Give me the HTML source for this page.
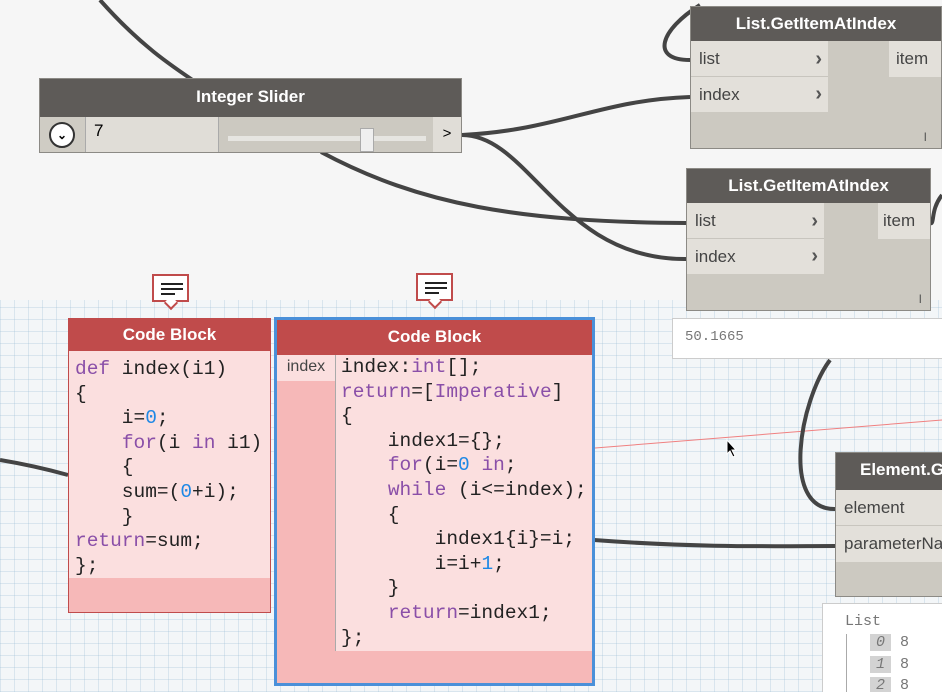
<!DOCTYPE html>
<html><head><style>
*{box-sizing:border-box;margin:0;padding:0}
body{width:942px;height:692px;overflow:hidden;position:relative;background:#f6f6f6;font-family:"Liberation Sans",sans-serif}
.grid{position:absolute;left:0;top:300px;width:942px;height:392px;background:
repeating-linear-gradient(90deg,rgba(150,185,210,.28) 0 1px,transparent 1px 14px),
repeating-linear-gradient(0deg,rgba(150,185,210,.28) 0 1px,transparent 1px 12px),#f3f6f8;}
.node{position:absolute;background:#ccc9c1;border:1px solid #8c8a85;overflow:hidden}
.hd{background:#5e5b58;color:#fff;font-weight:bold;font-size:17px;text-align:center;white-space:nowrap}
.port{position:absolute;background:#e3e0da;color:#444;font-size:17px;padding-left:8px;border-bottom:1px solid #c8c5be;white-space:nowrap}
.arr{position:absolute;right:6px;font-weight:bold;color:#555;font-size:20px}
.mono{font-family:"Liberation Mono",monospace}
.cb{position:absolute;background:#fbdfdf}
.cb .hd{background:#c04b4b}
.code{font-family:"Liberation Mono",monospace;font-size:19.5px;line-height:24.6px;color:#222;white-space:pre}
.k{color:#8a4fa8}.n{color:#1e88e5}
.note{position:absolute;width:37px;height:28px;background:#fff;border:2px solid #c04b4b}
.note i{position:absolute;left:7px;height:1.5px;background:#222}
.note b{position:absolute;left:12px;bottom:-8px;width:10px;height:10px;background:#fff;border-right:2px solid #c04b4b;border-bottom:2px solid #c04b4b;transform:rotate(45deg)}
</style></head><body>
<div class="grid"></div>
<svg style="position:absolute;left:0;top:0" width="942" height="692">
<line x1="595" y1="448" x2="942" y2="420" stroke="#f08080" stroke-width="1"/>
<g fill="none" stroke="#444" stroke-width="4">
<path d="M100 0 C140 45 170 65 200 85"/>
<path d="M321 152 C420 205 520 222 686 223"/>
<path d="M462 135 C560 130 600 100 690 97"/>
<path d="M700 5 C660 30 650 60 690 60"/>
<path d="M462 135 C530 135 560 260 686 259"/>
<path d="M0 460 C30 465 50 470 68 475"/>
<path d="M594 540 C700 548 780 546 835 546"/>
<path d="M830 360 C800 400 780 510 835 509"/>
<path d="M942 195 C930 210 935 225 930 223"/>
</g>
<path d="M727 440 l0 14 l3-3 l3 6 l2-1 l-3-6 l4 0z" fill="#000" stroke="#fff" stroke-width="1"/>
</svg>

<div class="node" style="left:39px;top:78px;width:423px;height:75px">
<div class="hd" style="height:38px;line-height:36px">Integer Slider</div>
<div style="position:absolute;left:0;top:38px;width:45px;height:35px;background:#cfccc4"><div style="position:absolute;left:9px;top:5px;width:26px;height:26px;border-radius:50%;border:2px solid #333;background:#fff;text-align:center;font-size:12px;line-height:22px;font-weight:bold">⌄</div></div>
<div style="position:absolute;left:45px;top:38px;width:134px;height:35px;background:#e0ddd7;border-left:1px solid #aaa;border-right:1px solid #aaa;padding:4px 8px;font-size:17px">7</div>
<div style="position:absolute;left:188px;top:57px;width:198px;height:5px;background:#e6e5e1"></div>
<div style="position:absolute;left:320px;top:49px;width:14px;height:24px;background:#efefef;border:1px solid #aaa"></div>
<div style="position:absolute;right:0;top:38px;width:28px;height:35px;background:#e0ddd7;font-size:15px;text-align:center;line-height:34px">&gt;</div>
</div>

<div class="node" style="left:690px;top:6px;width:252px;height:143px">
<div class="hd" style="height:34px;line-height:33px">List.GetItemAtIndex</div>
<div class="port" style="left:0;top:34px;width:137px;height:36px;line-height:36px">list<span class="arr">›</span></div>
<div class="port" style="left:0;top:70px;width:137px;height:35px;line-height:35px;border:0">index<span class="arr">›</span></div>
<div class="port" style="right:0;top:34px;width:52px;height:36px;line-height:36px;border:0;padding-left:7px">item</div>
<div style="position:absolute;right:14px;bottom:4px;font-size:12px;color:#555">I</div>
</div>
<div class="node" style="left:686px;top:168px;width:245px;height:143px">
<div class="hd" style="height:34px;line-height:33px">List.GetItemAtIndex</div>
<div class="port" style="left:0;top:34px;width:137px;height:36px;line-height:36px">list<span class="arr">›</span></div>
<div class="port" style="left:0;top:70px;width:137px;height:35px;line-height:35px;border:0">index<span class="arr">›</span></div>
<div class="port" style="right:0;top:34px;width:52px;height:36px;line-height:36px;border:0;padding-left:5px">item</div>
<div style="position:absolute;right:8px;bottom:4px;font-size:12px;color:#555">I</div>
</div>
<div class="mono" style="position:absolute;left:672px;top:318px;width:270px;height:41px;background:#fff;border:1px solid #ccc;border-right:0;font-size:14px;color:#777;padding:10px 12px">50.1665</div>

<div class="node" style="left:835px;top:452px;width:107px;height:145px;border-right:0">
<div class="hd" style="height:37px;line-height:34px;text-align:left;padding-left:24px">Element.GetParameter</div>
<div class="port" style="left:0;top:37px;width:107px;height:36px;line-height:36px">element</div>
<div class="port" style="left:0;top:73px;width:107px;height:36px;line-height:36px;border:0">parameterName</div>
</div>
<div style="position:absolute;left:822px;top:603px;width:120px;height:89px;background:#fff;border:1px solid #ccc;border-right:0;border-bottom:0;overflow:hidden">
<div class="mono" style="position:absolute;left:22px;top:9px;font-size:15px;color:#777">List</div>
<div style="position:absolute;left:23px;top:30px;width:1px;height:60px;background:#aaa"></div>
<div class="mono" style="position:absolute;left:47px;top:28px;font-size:15px;line-height:21.5px;color:#777">
<div><span style="background:#d3d3d3;padding:0 6px;font-style:italic">0</span> 8</div>
<div><span style="background:#d3d3d3;padding:0 6px;font-style:italic">1</span> 8</div>
<div><span style="background:#d3d3d3;padding:0 6px;font-style:italic">2</span> 8</div></div>
</div>

<div class="note" style="left:152px;top:274px"><b></b><i style="top:7px;width:22px"></i><i style="top:12px;width:22px"></i><i style="top:17px;width:14px"></i></div>
<div class="note" style="left:416px;top:273px"><b></b><i style="top:7px;width:22px"></i><i style="top:12px;width:22px"></i><i style="top:17px;width:14px"></i></div>

<div class="cb" style="left:68px;top:318px;width:203px;height:295px;border:1px solid #c04b4b">
<div class="hd" style="height:32px;line-height:32px">Code Block</div>
<div style="position:absolute;left:0;bottom:0;width:100%;height:34px;background:#f6b8b8"></div>
<div class="code" style="position:absolute;left:6px;top:38px"><span class="k">def</span> index(i1)
{
    i=<span class="n">0</span>;
    <span class="k">for</span>(i <span class="k">in</span> i1)
    {
    sum=(<span class="n">0</span>+i);
    }
<span class="k">return</span>=sum;
};</div>
</div>

<div class="cb" style="left:274px;top:317px;width:321px;height:369px;border:3px solid #4a90d9">
<div class="hd" style="height:35px;line-height:33px">Code Block</div>
<div style="position:absolute;left:0;top:35px;width:58px;height:296px;background:#f6b8b8"></div>
<div style="position:absolute;left:0;top:35px;width:58px;height:26px;background:#fbdfdf;color:#444;font-size:16px;text-align:center;line-height:24px">index</div>
<div style="position:absolute;left:58px;top:35px;width:1px;height:296px;background:#aaa"></div>
<div class="code" style="position:absolute;left:64px;top:35px">index:<span class="k">int</span>[];
<span class="k">return</span>=[<span class="k">Imperative</span>]
{
    index1={};
    <span class="k">for</span>(i=<span class="n">0</span> <span class="k">in</span>;
    <span class="k">while</span> (i&lt;=index);
    {
        index1{i}=i;
        i=i+<span class="n">1</span>;
    }
    <span class="k">return</span>=index1;
};</div>
<div style="position:absolute;left:0;bottom:0;width:100%;height:32px;background:#f6b8b8"></div>
</div>
</body></html>
